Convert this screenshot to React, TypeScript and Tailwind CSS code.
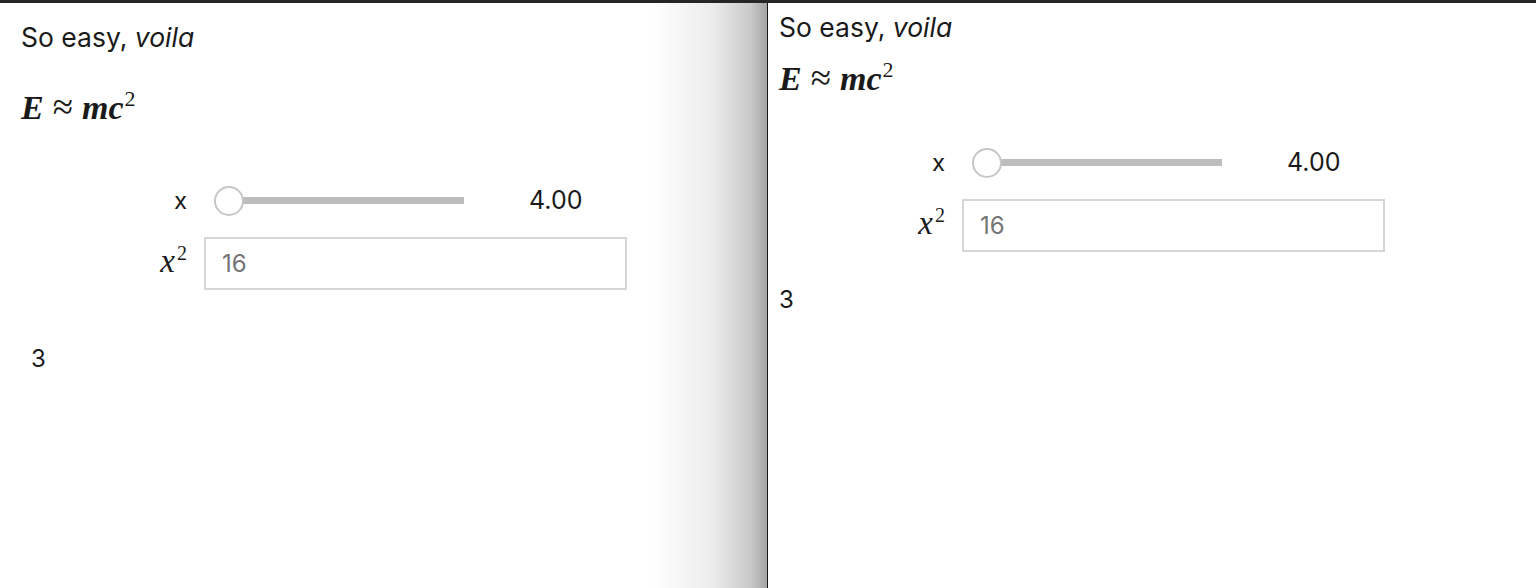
import React from 'react';

const sans = "font-['Inter','Liberation_Sans',sans-serif]";
const serif = "font-['Liberation_Serif','DejaVu_Serif',serif]";

function Equation() {
  return (
    <div className={`${serif} text-[34px] leading-[40px] text-[#1a1a1a]`}>
      <i className="font-bold">E</i>
      <span className="mx-[9px] text-[37px]">≈</span>
      <i className="font-bold">mc</i>
      <span className="inline-block align-top text-[22px] leading-[22px] mt-[1px] ml-[1px]">2</span>
    </div>
  );
}

function SliderRow() {
  return (
    <div className="flex items-center h-[32px]">
      <div className={`${sans} w-[168px] text-right text-[24px] pr-[2px] text-[#1a1a1a]`}>x</div>
      <div className="ml-[15px] relative w-[270px] h-[32px]">
        <div className="absolute left-[25px] top-[12px] w-[235px] h-[7px] bg-[#bdbdbd]" />
        <div className="absolute left-[10px] top-[1px] w-[30px] h-[30px] rounded-full bg-white border-2 border-[#c6c6c6]" />
      </div>
      <div className={`${sans} ml-[55px] text-[25px] text-[#1a1a1a]`}>4.00</div>
    </div>
  );
}

function OutputRow() {
  return (
    <div className="flex items-center mt-[20px]">
      <div className={`${serif} w-[168px] text-right leading-[40px] pr-[2px] text-[#1a1a1a]`}>
        <i className="text-[33px]">x</i>
        <span className="inline-block align-top text-[20px] leading-[20px] mt-[2px] ml-[2px]">2</span>
      </div>
      <div className="ml-[15px] w-[423px] h-[53px] border-2 border-[#d6d6d6] flex items-center pl-[16px]">
        <span className={`${sans} text-[24px] text-[#757575]`}>16</span>
      </div>
    </div>
  );
}

function Panel({ compact }: { compact?: boolean }) {
  return (
    <div className={compact ? 'pl-[11px] pt-[9px]' : 'pl-[21px] pt-[19px]'}>
      <div className={`${sans} text-[26.5px] leading-[30px] text-[#1a1a1a]`}>
        So easy, <i>voila</i>
      </div>
      <div className={compact ? 'mt-[16px]' : 'mt-[35px]'}>
        <Equation />
      </div>
      <div className={compact ? 'mt-[48px]' : 'mt-[57px]'}>
        <SliderRow />
        <OutputRow />
      </div>
      <div
        className={`${sans} text-[24px] leading-[30px] text-[#1a1a1a] ${
          compact ? 'mt-[33px]' : 'mt-[54px] pl-[10px]'
        }`}
      >
        3
      </div>
    </div>
  );
}

export default function App() {
  return (
    <div className="w-[1536px] h-[588px] bg-white flex flex-col overflow-hidden">
      <div className="h-[3px] bg-[#262626] shrink-0" />
      <div className="flex flex-1">
        <div className="w-[767px] h-full bg-[linear-gradient(to_right,#ffffff_0%,#ffffff_85%,#ececec_93%,#c8c8c8_98%,#a4a4a4_100%)]">
          <Panel />
        </div>
        <div className="w-[1px] bg-[#1a1a1a]" />
        <div className="flex-1 h-full">
          <Panel compact />
        </div>
      </div>
    </div>
  );
}
